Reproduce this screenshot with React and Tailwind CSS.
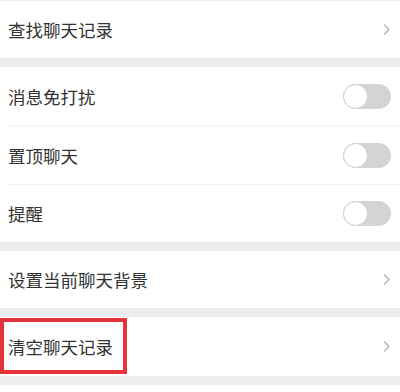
const font = { fontFamily: '"Noto Sans CJK SC", "Noto Sans", sans-serif' };

function Chevron() {
  return (
    <svg width="9" height="13" viewBox="0 0 9 13" className="text-[#b3b3b3]">
      <path d="M2 1.5 L7 6.5 L2 11.5" fill="none" stroke="currentColor" strokeWidth="1.4" />
    </svg>
  );
}

function Toggle() {
  return (
    <div className="w-[48px] h-[25px] rounded-full bg-[#d4d4d4] flex items-center">
      <div className="w-[25px] h-[25px] rounded-full bg-white border border-[#cfcfcf]" />
    </div>
  );
}

function Row({ label, right, height = 'h-[58px]', divider, children }) {
  return (
    <div className={`relative bg-white ${height} flex items-center justify-between pl-2 pr-[9px]`}>
      <span className="text-[17.5px] text-[#333] leading-none">{label}</span>
      {right}
      {divider && <div className="absolute left-2 right-0 bottom-0 h-px bg-[#efefef]" />}
      {children}
    </div>
  );
}

export default function App() {
  return (
    <div className="w-[400px] h-[392px] bg-white overflow-hidden" style={font}>
      <div className="h-px bg-[#eeeeee]" />
      <Row label="查找聊天记录" right={<Chevron />} height="h-[57px]" />
      <div className="h-[9px] bg-[#ededed]" />
      <Row label="消息免打扰" right={<Toggle />} height="h-[59px]" divider />
      <Row label="置顶聊天" right={<Toggle />} height="h-[59px]" divider />
      <Row label="提醒" right={<Toggle />} height="h-[57px]" />
      <div className="h-[9px] bg-[#ededed]" />
      <Row label="设置当前聊天背景" right={<Chevron />} height="h-[57px]" />
      <div className="h-[9px] bg-[#ededed]" />
      <Row label="清空聊天记录" right={<Chevron />} height="h-[59px]">
        <div className="absolute left-0 top-px w-[127px] h-[56px] border-[4px] border-[#e5333b]" />
      </Row>
      <div className="h-[9px] bg-[#ededed]" />
    </div>
  );
}
